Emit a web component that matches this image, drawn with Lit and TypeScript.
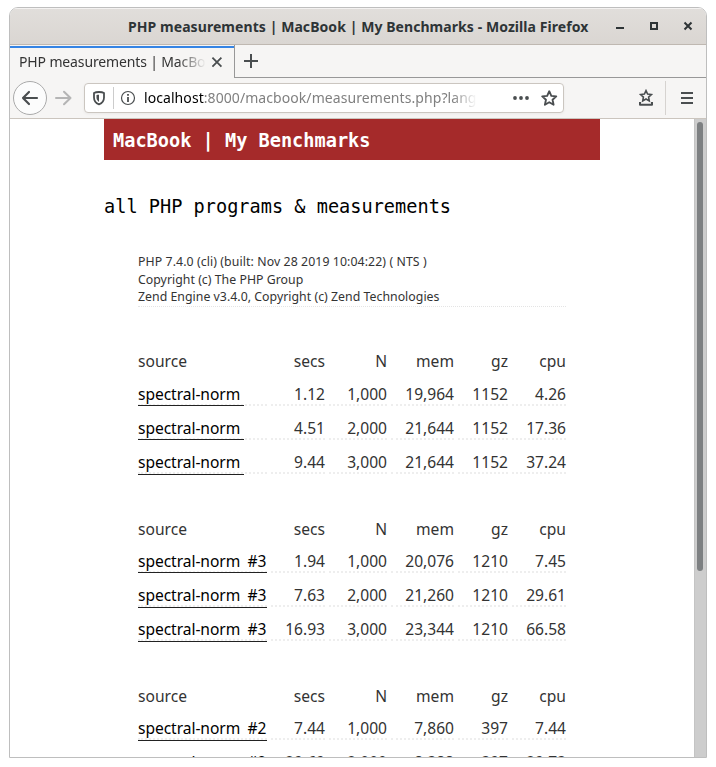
import { LitElement, html, css, svg } from "lit";
import { customElement } from "lit/decorators.js";

type Row = { src: string; drop: number; v: string[] };
const SN = "spectral-norm";
const tables: Row[][] = [
  [
    { src: "", drop: 0, v: ["1.12", "1,000", "19,964", "1152", "4.26"] },
    { src: "", drop: 0, v: ["4.51", "2,000", "21,644", "1152", "17.36"] },
    { src: "", drop: 1, v: ["9.44", "3,000", "21,644", "1152", "37.24"] },
  ],
  [
    { src: "#3", drop: 0, v: ["1.94", "1,000", "20,076", "1210", "7.45"] },
    { src: "#3", drop: 1, v: ["7.63", "2,000", "21,260", "1210", "29.61"] },
    { src: "#3", drop: 1, v: ["16.93", "3,000", "23,344", "1210", "66.58"] },
  ],
  [
    { src: "#2", drop: 1, v: ["7.44", "1,000", "7,860", "397", "7.44"] },
    { src: "#2", drop: 1, v: ["29.69", "2,000", "8,388", "397", "29.73"] },
  ],
];
const star = "M8 1.2 10 5.7 14.8 6.2 11.2 9.5 12.2 14.3 8 11.9 3.8 14.3 4.8 9.5 1.2 6.2 6 5.7Z";

@customElement("app-root")
export class AppRoot extends LitElement {
  static styles = css`
    :host {
      display: block;
      box-sizing: border-box;
      width: 716px;
      height: 767px;
      padding: 7px 9px 9px;
      background: #fff;
      overflow: hidden;
      font-family: "Noto Sans", "Open Sans", sans-serif;
      color: #333;
    }
    * { box-sizing: border-box; }
    svg { display: block; flex: none; fill: none; stroke: #4a4e50; }
    .window {
      height: 751px;
      width: 698px;
      border: 1px solid #bebebe;
      border-radius: 9px 9px 0 0;
      overflow: hidden;
      display: flex;
      flex-direction: column;
    }
    .title {
      height: 37px;
      flex: none;
      display: flex;
      align-items: center;
      background: linear-gradient(#e1dedb, #dad6d2);
      border-bottom: 1px solid #bfb8b1;
      box-shadow: inset 0 1px #f4f2f1;
      padding: 2px 0 0 118px;
      color: #2e3436;
    }
    .title b {
      width: 485px;
      font-size: 14px;
      line-height: 20px;
      white-space: nowrap;
      letter-spacing: 0.07px;
    }
    .title svg { stroke: #2e3436; margin-top: -2px; }
    .tabs { height: 33px; flex: none; display: flex; background: #f6f5f4; }
    .tab {
      width: 224px;
      border-top: 2px solid #3584e4;
      margin-top: 1px;
      padding: 0 8px 2px 9px;
      display: flex;
      align-items: center;
      font-size: 14px;
    }
    .tabtext {
      width: 187px;
      overflow: hidden;
      white-space: nowrap;
      letter-spacing: -0.14px;
      line-height: 24px;
      -webkit-mask-image: linear-gradient(to right, #000 158px, transparent 187px);
      mask-image: linear-gradient(to right, #000 158px, transparent 187px);
    }
    .rest {
      flex: 1;
      border-left: 1px solid #989898;
      border-bottom: 1px solid #989898;
      padding: 9px 0 0 9px;
    }
    .bar {
      height: 41px;
      flex: none;
      display: flex;
      align-items: center;
      background: #f6f5f4;
      border-bottom: 1px solid #cbc5be;
      padding-left: 3px;
    }
    .back {
      width: 34px;
      height: 34px;
      border: 1px solid #aaa;
      border-radius: 50%;
      background: #fcfcfc;
      display: grid;
      place-items: center;
    }
    .fwd { margin-left: 8px; stroke: #b5b5b5; }
    .url {
      width: 480px;
      height: 30px;
      margin-left: 11px;
      border: 1px solid #cbc6c0;
      border-radius: 4px;
      background: #fff;
      display: flex;
      align-items: center;
      padding-left: 6px;
      box-shadow: 0 1px 3px #0000000d;
    }
    .sep { width: 1px; height: 22px; margin: 0 6px 0 6px; background: #ccc; }
    .addr {
      width: 333px;
      margin-left: 8px;
      overflow: hidden;
      white-space: nowrap;
      font-size: 14px;
      line-height: 22px;
      color: #808080;
      letter-spacing: 0.07px;
      -webkit-mask-image: linear-gradient(to right, #000 308px, transparent 333px);
      mask-image: linear-gradient(to right, #000 308px, transparent 333px);
    }
    .addr span { color: #000; }
    .dots { margin-right: -2px; }
    .save { margin-left: 73px; }
    .vline { width: 1px; height: 34px; background: #d6d3d0; margin: 0 14px 0 10px; }
    .view { flex: 1; min-height: 0; display: flex; background: #fff; }
    .page { flex: 1; min-width: 0; overflow: hidden; padding-left: 94px; }
    .scroll { width: 12px; flex: none; background: #cdcdcd; border-left: 1px solid #c4c4c4; padding: 3px 0 0 2px; }
    .thumb { width: 6px; height: 449px; border-radius: 3px; background: #7d8082; }
    h1, h2 {
      margin: 0;
      font-family: "DejaVu Sans Mono", monospace;
      font-size: 18.6px;
      white-space: pre;
    }
    h1 {
      width: 496px;
      height: 41px;
      background: #a52a2a;
      color: #fff;
      padding-left: 9px;
      line-height: 43px;
    }
    h2 { height: 88px; line-height: 93px; font-weight: 400; color: #000; }
    .about {
      width: 428px;
      height: 54px;
      margin: 5px 0 43px 34px;
      border-bottom: 1px dotted #e4e4e4;
      font-size: 12.3px;
      line-height: 17.6px;
      white-space: nowrap;
    }
    .about div { letter-spacing: 0.03px; }
    .about div:first-child { letter-spacing: 0.09px; }
    .group { width: 428px; margin: 0 0 43px 34px; font-size: 15.6px; }
    .row {
      display: grid;
      grid-template-columns: 129px 54px 58px 63px 50px 54px;
      column-gap: 4px;
      height: 34px;
      white-space: pre;
      text-align: right;
    }
    .row > div { border-bottom: 2px dotted #eee; line-height: 45px; height: 34px; }
    .row > div:first-child { text-align: left; color: #000; }
    .row.head { height: 22px; }
    .row.head > div { border: 0; height: 22px; line-height: 24px; color: #333; }
    .about + .group .head > div { line-height: 22px; }
    .link { height: 34px; border-bottom: 1px solid #222; letter-spacing: -0.06px; }
    .link.plain { width: 106px; }
    .link.low { height: 35px; }
    .name { display: inline-block; width: 109.5px; }
  `;

  private group(rows: Row[]) {
    return html`<div class="group">
      <div class="row head">${["source", "secs", "N", "mem", "gz", "cpu"].map((h) => html`<div>${h}</div>`)}</div>
      ${rows.map(
        (r) => html`<div class="row"><div><div class="link ${r.src ? "" : "plain"} ${r.drop ? "low" : ""}">${r.src ? html`<span class="name">${SN}</span>${r.src}` : SN}</div></div>${r.v.map((x) => html`<div>${x}</div>`)}</div>`
      )}
    </div>`;
  }

  render() {
    return html`<div class="window">
      <div class="title">
        <b>PHP measurements | MacBook | My Benchmarks - Mozilla Firefox</b>
        <svg width="90" height="20" viewBox="0 0 90 20" stroke-width="2">
          ${svg`<path d="M3 12H11"/><path d="M38 7H44V13H38Z"/><path d="M71.5 6.5 78.5 13.5M78.5 6.5 71.5 13.5"/>`}
        </svg>
      </div>
      <div class="tabs">
        <div class="tab">
          <div class="tabtext">PHP measurements | MacBook</div>
          <svg width="20" height="20" viewBox="0 0 20 20" stroke-width="1.8"><path d="M6.4 5.6 15.4 14.6M15.4 5.6 6.4 14.6" /></svg>
        </div>
        <div class="rest">
          <svg width="16" height="16" viewBox="0 0 16 16" stroke-width="2"><path d="M0 7H14M7 0V14" /></svg>
        </div>
      </div>
      <div class="bar">
        <div class="back">
          <svg width="18" height="16" viewBox="0 0 18 16" stroke-width="2.2" stroke-linecap="round" stroke-linejoin="round"><path d="M16 8H2M8 2 2 8 8 14" /></svg>
        </div>
        <svg class="fwd" width="18" height="16" viewBox="0 0 18 16" stroke-width="2" stroke-linecap="round" stroke-linejoin="round"><path d="M1 8H15.5M9 1.7 15.5 8 9 14.3" /></svg>
        <div class="url">
          <svg width="16" height="16" viewBox="0 0 16 16" stroke-width="1.8"><path d="M8 2C10 2 12 2.4 13 3V7.5C13 11 11 13.2 8 14.3 5 13.2 3 11 3 7.5V3C4 2.4 6 2 8 2Z" stroke-linejoin="round" /><path d="M8 4.7C7 4.7 6 4.8 5.5 5V7.5C5.5 9.5 6.5 11 8 11.9Z" stroke="none" fill="#4a4e50" /></svg>
          <div class="sep"></div>
          <svg width="16" height="16" viewBox="0 0 16 16" stroke-width="1.2"><circle cx="8" cy="8" r="6.5" /><path d="M8 7V12M8 4V5.7" stroke-width="1.8" /></svg>
          <div class="addr"><span>localhost</span>:8000/macbook/measurements.php?lang=</div>
          <svg class="dots" width="66" height="20" viewBox="0 0 66 20"><g fill="#4a4e50" stroke="none"><circle cx="38" cy="10" r="1.9" /><circle cx="44" cy="10" r="1.9" /><circle cx="50" cy="10" r="1.9" /></g></svg>
          <svg width="16.5" height="16.5" viewBox="0 0 16 16" stroke-width="1.8" stroke-linejoin="round"><path d=${star} /></svg>
        </div>
        <svg class="save" width="18" height="18" viewBox="0 0 18 18" stroke-width="2"><path d="M9 1.6 10.6 5 14.4 5.5 11.6 8.1 12.3 11.9 9 10 5.7 11.9 6.4 8.1 3.6 5.5 7.4 5Z" stroke-width="1.6" /><path d="M3 13V15.8H15V13" stroke-linejoin="round" /></svg>
        <div class="vline"></div>
        <svg width="14" height="14" viewBox="0 0 14 14" stroke-width="2"><path d="M1 2H13M1 7H13M1 12H13" /></svg>
      </div>
      <div class="view">
        <div class="page">
          <h1>MacBook | My Benchmarks</h1>
          <h2>all PHP programs &amp; measurements</h2>
          <section class="about">
            <div>PHP 7.4.0 (cli) (built: Nov 28 2019 10:04:22) ( NTS )</div>
            <div>Copyright (c) The PHP Group</div>
            <div>Zend Engine v3.4.0, Copyright (c) Zend Technologies</div>
          </section>
          ${tables.map((t) => this.group(t))}
        </div>
        <div class="scroll"><div class="thumb"></div></div>
      </div>
    </div>`;
  }
}
